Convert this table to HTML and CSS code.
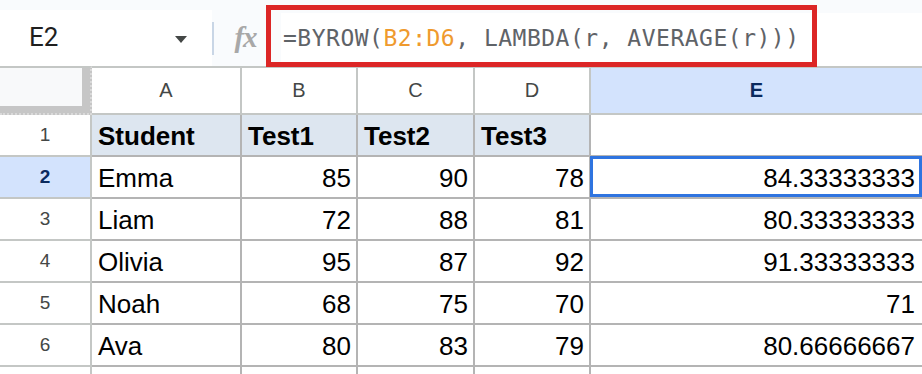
FILE: index.html
```html
<!DOCTYPE html>
<html lang="en">
<head>
<meta charset="utf-8">
<title>BYROW</title>
<link rel="stylesheet" href="styles.css">
</head>
<body>
<div class="app">
  <div class="toolbar">
    <div class="namebox">
      <span class="name">E2</span>
      <svg class="caret" width="12" height="7" viewBox="0 0 12 7"><path d="M0 0h12L6 7z" fill="#444746"/></svg>
    </div>
    <div class="sep"></div>
    <div class="fx">fx</div>
    <div class="formula"><span>=BYROW(</span><span class="ref">B2:D6</span><span>, LAMBDA(r, AVERAGE(r)))</span></div>
    <div class="annot"></div>
  </div>
  <div class="grid">
    <div class="corner"><div class="corner-in"></div></div>
    <div class="ch">A</div>
    <div class="ch">B</div>
    <div class="ch">C</div>
    <div class="ch">D</div>
    <div class="ch ch-sel last">E</div>

    <div class="rh">1</div>
    <div class="c hd">Student</div>
    <div class="c hd">Test1</div>
    <div class="c hd">Test2</div>
    <div class="c hd">Test3</div>
    <div class="c last"></div>

    <div class="rh rh-sel">2</div>
    <div class="c">Emma</div>
    <div class="c num">85</div>
    <div class="c num">90</div>
    <div class="c num">78</div>
    <div class="c num last sel">84.33333333</div>

    <div class="rh">3</div>
    <div class="c">Liam</div>
    <div class="c num">72</div>
    <div class="c num">88</div>
    <div class="c num">81</div>
    <div class="c num last">80.33333333</div>

    <div class="rh">4</div>
    <div class="c">Olivia</div>
    <div class="c num">95</div>
    <div class="c num">87</div>
    <div class="c num">92</div>
    <div class="c num last">91.33333333</div>

    <div class="rh">5</div>
    <div class="c">Noah</div>
    <div class="c num">68</div>
    <div class="c num">75</div>
    <div class="c num">70</div>
    <div class="c num last">71</div>

    <div class="rh">6</div>
    <div class="c">Ava</div>
    <div class="c num">80</div>
    <div class="c num">83</div>
    <div class="c num">79</div>
    <div class="c num last">80.66666667</div>

    <div class="rh stub"></div>
    <div class="c stub"></div>
    <div class="c stub"></div>
    <div class="c stub"></div>
    <div class="c stub"></div>
    <div class="c stub last"></div>
  </div>
</div>
</body>
</html>
```

FILE: styles.css
```css
* { box-sizing: border-box; }
html, body { margin: 0; padding: 0; background: #ffffff; }
body { width: 922px; height: 374px; overflow: hidden; font-family: "Liberation Sans", Arial, sans-serif; }

.toolbar {
  position: relative;
  display: flex;
  height: 66px;
  background: #f9fbfd;
}
.namebox {
  width: 212px;
  margin-top: 10px;
  height: 56px;
  background: #ffffff;
  display: flex;
  align-items: center;
  justify-content: space-between;
  padding: 0 25px 2px 29px;
}
.name {
  font-family: Roboto, "Liberation Sans", sans-serif;
  font-size: 26px;
  color: #1f1f1f;
}
.caret { display: block; margin-top: 4px; }
.sep {
  width: 2px;
  height: 33px;
  margin-top: 22px;
  background: #c9d6e6;
}
.fx {
  width: 67px;
  display: flex;
  align-items: center;
  justify-content: center;
  padding-top: 8px;
  padding-right: 4px;
  font-family: "Liberation Serif", serif;
  font-style: italic;
  font-weight: bold;
  font-size: 29px;
  color: #a8a8a8;
  letter-spacing: -1px;
}
.formula {
  flex: 1;
  margin-top: 13px;
  background: #ffffff;
  display: flex;
  align-items: center;
  padding: 0 0 4px 2px;
  font-family: "DejaVu Sans Mono", "Liberation Mono", monospace;
  font-size: 23px;
  letter-spacing: 0.5px;
  color: #5f6368;
  white-space: pre;
}
.ref { color: #ef9a2e; }
.annot {
  position: absolute;
  left: 266px;
  top: 5px;
  width: 551px;
  height: 62px;
  border: 5px solid #dc2626;
}

.grid {
  display: grid;
  grid-template-columns: 92px 150px 116px 117px 116px 1fr;
  grid-template-rows: 49px repeat(6, 42px) 7px;
}
.corner {
  border-top: 2px solid #c4c7c5;
  background: #c6c6c6;
  border-right: 2px dotted #dadada;
  border-bottom: 2px dotted #dadada;
}
.corner-in {
  width: 82px;
  height: 38px;
  background: #f8f9fa;
}
.ch {
  border-top: 2px solid #c4c7c5;
  border-bottom: 2px solid #c4c7c5;
  border-right: 2px solid #c4c7c5;
  display: flex;
  align-items: center;
  justify-content: center;
  font-size: 20px;
  color: #444746;
}
.ch-sel {
  background: #d3e3fd;
  color: #0b2a5e;
  font-weight: bold;
}
.ch.last { border-right: none; }
.rh {
  border-right: 2px solid #c4c7c5;
  border-bottom: 2px solid #c4c7c5;
  display: flex;
  align-items: center;
  justify-content: center;
  font-size: 19px;
  color: #444746;
}
.rh-sel {
  background: #d3e3fd;
  color: #0b2a5e;
  font-weight: bold;
}
.c {
  border-right: 2px solid #b4b4b4;
  border-bottom: 2px solid #b4b4b4;
  display: flex;
  align-items: center;
  padding: 3px 5px 0 6px;
  font-size: 26px;
  color: #000000;
  white-space: nowrap;
}
.c.last { border-right: none; padding-right: 7px; }
.hd {
  background: #dde6f0;
  font-weight: bold;
}
.num { justify-content: flex-end; }
.sel { position: relative; }
.sel::after {
  content: "";
  position: absolute;
  top: -1px;
  left: -1px;
  right: 0;
  bottom: 0;
  border: 3px solid #2f74e0;
}
.stub { border-bottom: none; }
.rh.stub { border-right: 2px solid #c4c7c5; }
```
